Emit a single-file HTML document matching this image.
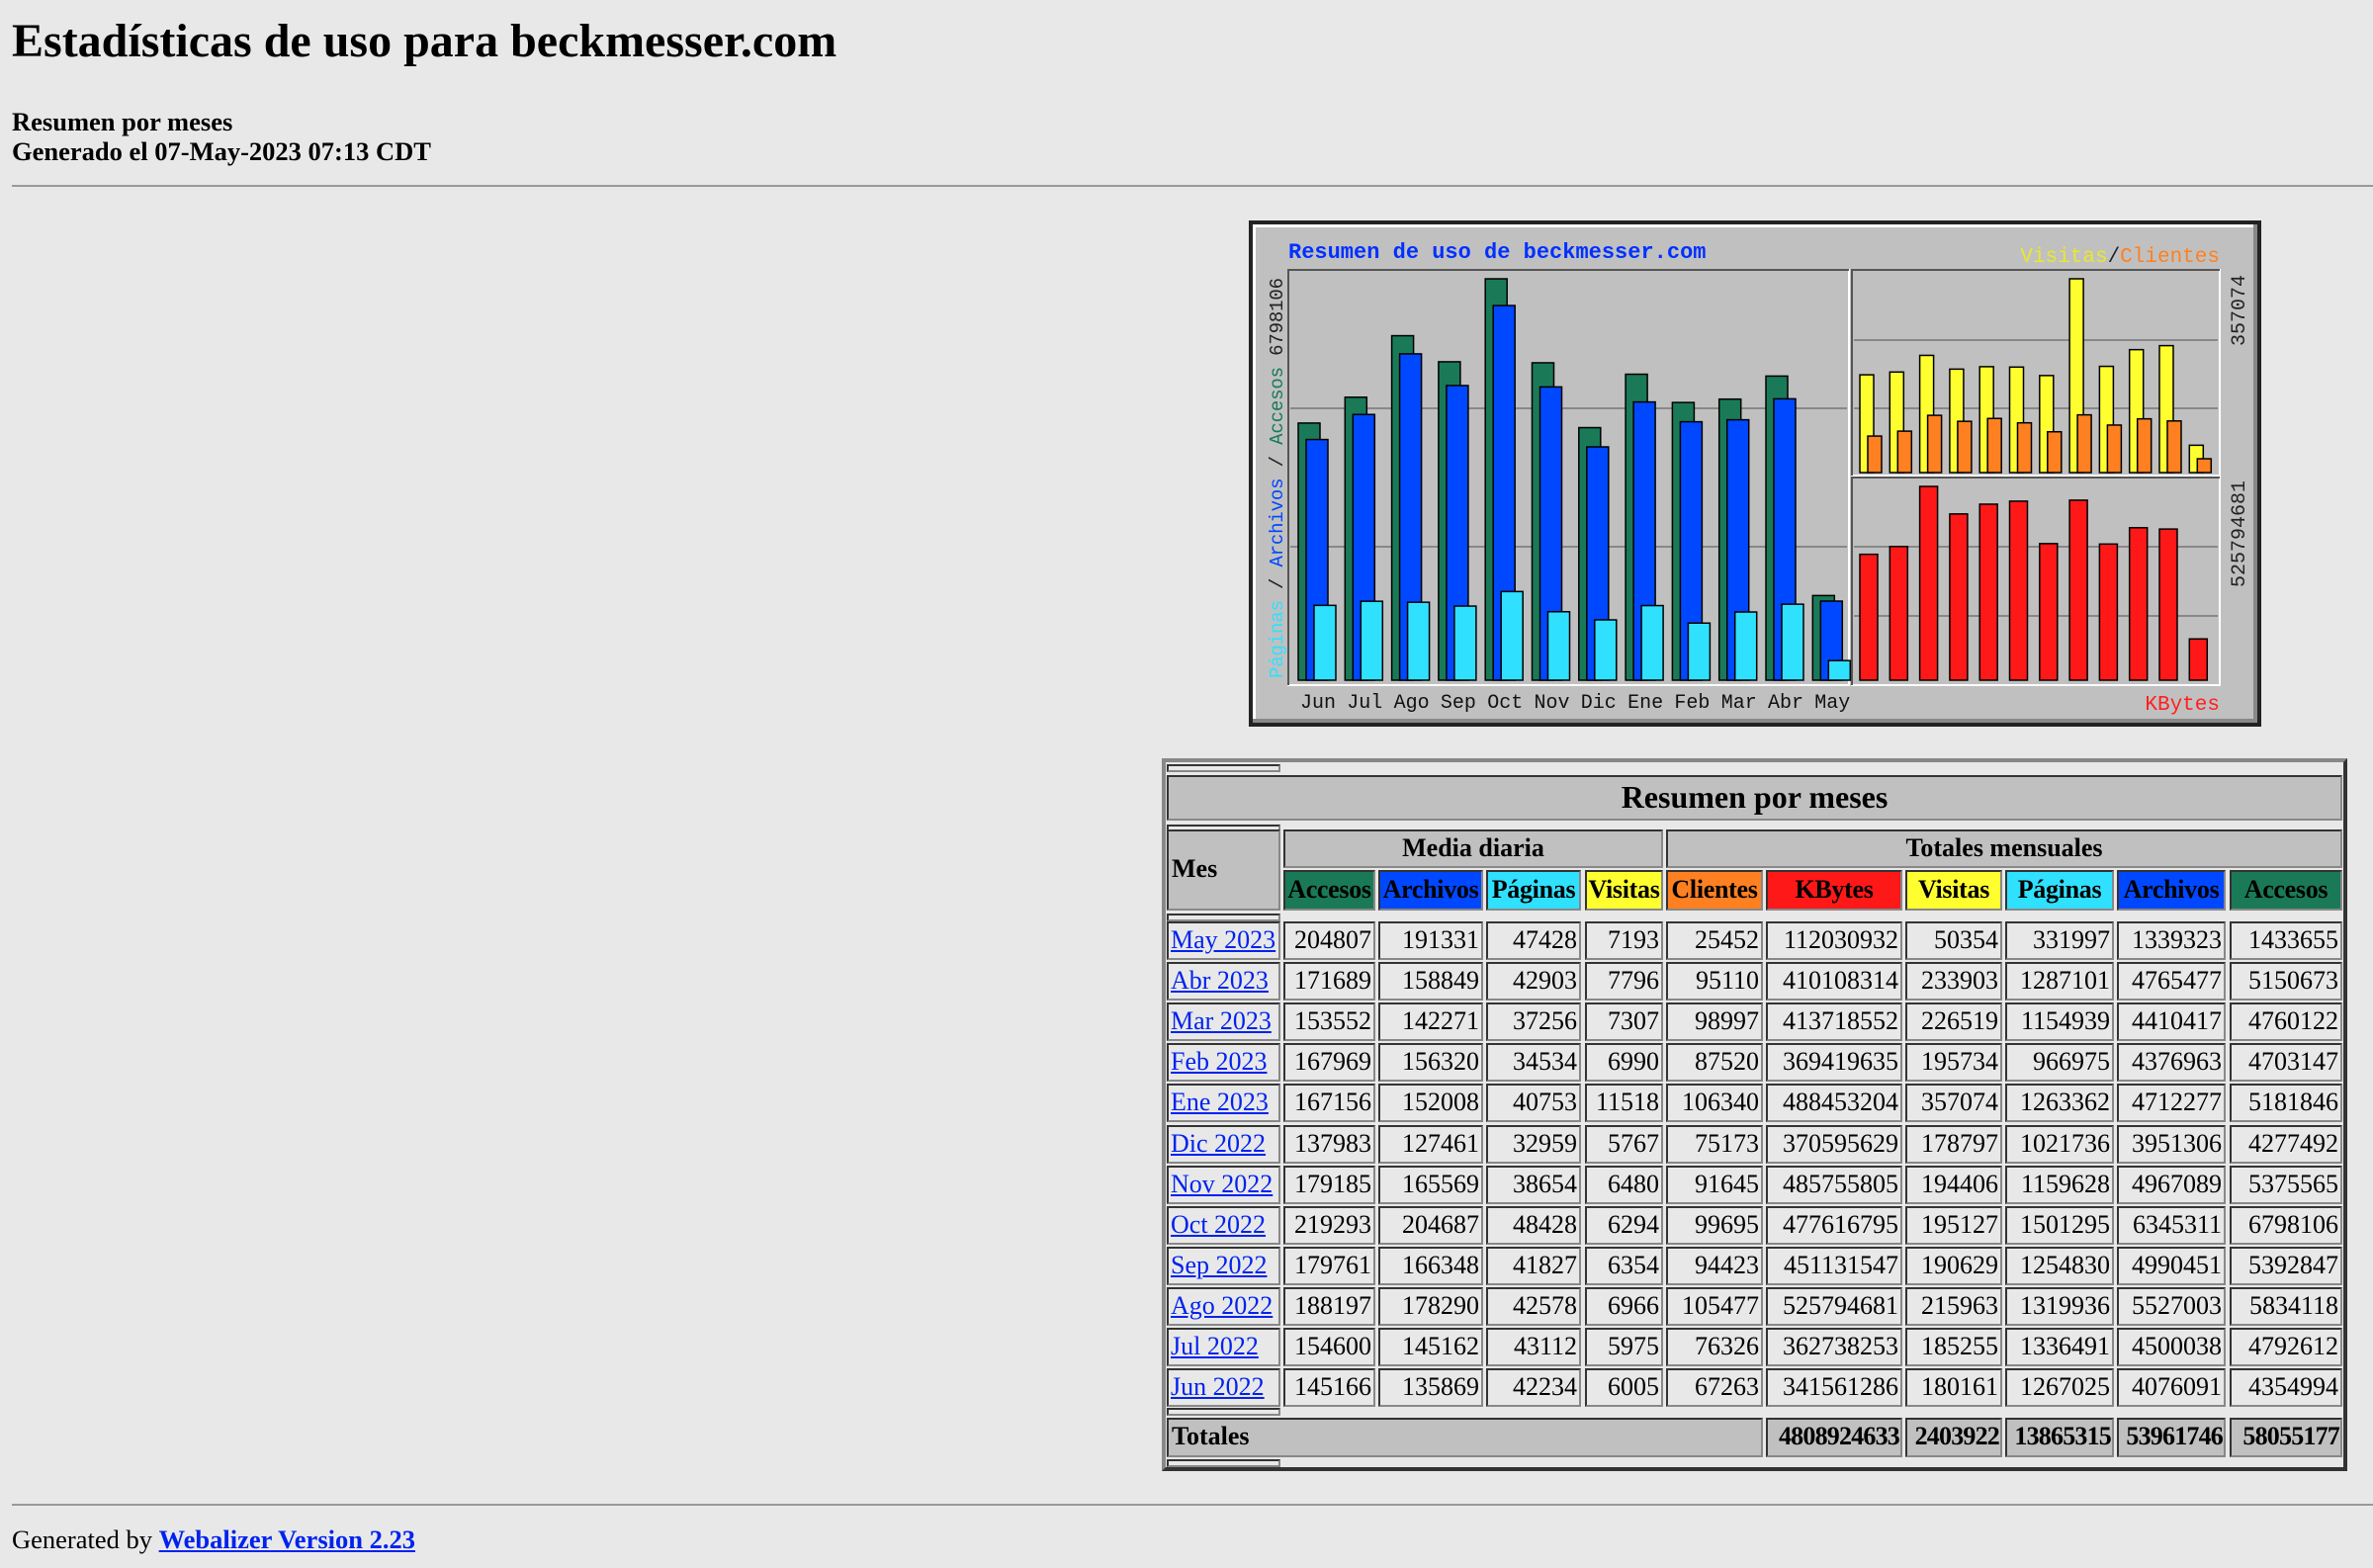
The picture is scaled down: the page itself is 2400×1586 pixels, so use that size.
<!DOCTYPE html>
<html><head><meta charset="utf-8">
<style>
body{margin:0;background:#e8e8e8;width:2400px;height:1586px;overflow:hidden;position:relative;font-family:"Liberation Serif",serif;color:#000}
.a{position:absolute;white-space:nowrap}
.hr{position:absolute;left:12px;width:2388px;height:0;border-top:2px solid #999;}
.c{position:absolute;box-sizing:border-box;border:2px solid;border-color:#333 #888 #888 #333;font-size:26px;line-height:34px;padding:0 3px;white-space:nowrap;overflow:hidden}
.sp{position:absolute;box-sizing:border-box;left:1180px;width:115px;height:8px;border:2px solid;border-color:#333 #888 #888 #333}
a{color:#0022ee}
</style></head><body>
<div class="a" style="left:12px;top:12px;font-size:48px;font-weight:bold;line-height:60px">Estadísticas de uso para beckmesser.com</div>
<div class="a" style="left:12px;top:108px;font-size:26.5px;font-weight:bold;line-height:30px">Resumen por meses</div>
<div class="a" style="left:12px;top:138px;font-size:26.5px;font-weight:bold;line-height:30px">Generado el 07-May-2023 07:13 CDT</div>
<div class="hr" style="top:187px"></div>

<div style="position:absolute;left:1175px;top:767px;width:1199px;height:721px;box-sizing:border-box;border:4px solid;border-color:#888 #333 #333 #888"></div>
<div id="tbl"></div>

<div class="hr" style="top:1521px"></div>
<div class="a" style="left:12px;top:1542px;font-size:26.5px;line-height:30px">Generated by <a href="#" style="font-weight:bold">Webalizer Version 2.23</a></div>

<svg id="ch" style="position:absolute;left:0;top:0" width="2400" height="1586" xmlns="http://www.w3.org/2000/svg"></svg>

<script>
var cols=[[1180,1295],[1298,1391],[1394,1500],[1503,1599],[1603,1682],[1685,1783],[1786,1924],[1927,2025],[2028,2138],[2141,2251],[2255,2369]];
var h='';
function cell(x1,x2,y,hh,txt,st){h+='<div class="c" style="left:'+x1+'px;top:'+y+'px;width:'+(x2-x1)+'px;height:'+hh+'px;'+(st||'')+'">'+txt+'</div>';}
h+='<div class="sp" style="top:773px"></div>';
cell(1180,2369,784,46,'Resumen por meses','background:#c0c0c0;text-align:center;font-weight:bold;font-size:32px;line-height:40px');
h+='<div class="sp" style="top:834px"></div>';
cell(1180,1295,839,82,'Mes','background:#c0c0c0;font-weight:bold;line-height:76px');
cell(1298,1682,839,39,'Media diaria','background:#c0c0c0;font-weight:bold;text-align:center');
cell(1685,2369,839,39,'Totales mensuales','background:#c0c0c0;font-weight:bold;text-align:center');
var hc=[['Accesos','#1a7a58'],['Archivos','#0048ff'],['Páginas','#30e0ff'],['Visitas','#ffff30'],['Clientes','#ff8020'],['KBytes','#ff1818'],['Visitas','#ffff30'],['Páginas','#30e0ff'],['Archivos','#0048ff'],['Accesos','#1a7a58']];
for(var i=0;i<10;i++)cell(cols[i+1][0],cols[i+1][1],880,41,hc[i][0],'background:'+hc[i][1]+';font-weight:bold;text-align:center;line-height:36px;padding:0;letter-spacing:-0.3px');
h+='<div class="sp" style="top:924px"></div>';
var rows=[
['May 2023',204807,191331,47428,7193,25452,112030932,50354,331997,1339323,1433655],
['Abr 2023',171689,158849,42903,7796,95110,410108314,233903,1287101,4765477,5150673],
['Mar 2023',153552,142271,37256,7307,98997,413718552,226519,1154939,4410417,4760122],
['Feb 2023',167969,156320,34534,6990,87520,369419635,195734,966975,4376963,4703147],
['Ene 2023',167156,152008,40753,11518,106340,488453204,357074,1263362,4712277,5181846],
['Dic 2022',137983,127461,32959,5767,75173,370595629,178797,1021736,3951306,4277492],
['Nov 2022',179185,165569,38654,6480,91645,485755805,194406,1159628,4967089,5375565],
['Oct 2022',219293,204687,48428,6294,99695,477616795,195127,1501295,6345311,6798106],
['Sep 2022',179761,166348,41827,6354,94423,451131547,190629,1254830,4990451,5392847],
['Ago 2022',188197,178290,42578,6966,105477,525794681,215963,1319936,5527003,5834118],
['Jul 2022',154600,145162,43112,5975,76326,362738253,185255,1336491,4500038,4792612],
['Jun 2022',145166,135869,42234,6005,67263,341561286,180161,1267025,4076091,4354994]];
for(var r=0;r<12;r++){var y=Math.round(932+r*41.1);
 for(var c=0;c<11;c++){ if(c==0)cell(cols[0][0],cols[0][1],y,39,'<a href="#">'+rows[r][0]+'</a>','padding:0 2px');
  else cell(cols[c][0],cols[c][1],y,39,rows[r][c],'text-align:right;padding:0 2px');}}
h+='<div class="sp" style="top:1424px"></div>';
cell(1180,1783,1434,40,'Totales','background:#c0c0c0;font-weight:bold');
var tot=[4808924633,2403922,13865315,53961746,58055177];
for(var i=0;i<5;i++)cell(cols[i+6][0],cols[i+6][1],1434,40,tot[i],'background:#c0c0c0;font-weight:bold;text-align:right;padding:0 1px;letter-spacing:-0.8px');
h+='<div class="sp" style="top:1476px"></div>';
document.getElementById('tbl').innerHTML=h;

var s='';
s+='<rect x="1263" y="223" width="1024" height="512" fill="#222"/>';
s+='<rect x="1267" y="227" width="1016" height="504" fill="#888"/>';
s+='<rect x="1267" y="227" width="1012" height="500" fill="#fff"/>';
s+='<rect x="1270" y="230" width="1009" height="497" fill="#c0c0c0"/>';
function panel(x1,y1,x2,y2){s+='<rect x="'+x1+'" y="'+y1+'" width="'+(x2-x1)+'" height="'+(y2-y1)+'" fill="#c0c0c0" stroke="#fff" stroke-width="2"/>';s+='<path d="M'+x1+' '+y2+'V'+y1+'H'+x2+'" fill="none" stroke="#555" stroke-width="2"/>';}
panel(1303,273,1870,693);panel(1873,273,2245,481);panel(1873,483,2245,693);
function gl(x1,x2,y){s+='<line x1="'+x1+'" x2="'+x2+'" y1="'+y+'" y2="'+y+'" stroke="#888" stroke-width="2"/>';}
gl(1305,1868,413);gl(1305,1868,553);gl(1875,2243,344);gl(1875,2243,413);gl(1875,2243,553);gl(1875,2243,623);
function bar(x,w,v,max,base,top,col){var hh=(base-top)*v/max;s+='<rect x="'+x+'" y="'+(base-hh)+'" width="'+w+'" height="'+hh+'" fill="'+col+'" stroke="#000" stroke-width="1.5"/>';}
var acc=[4354994,4792612,5834118,5392847,6798106,5375565,4277492,5181846,4703147,4760122,5150673,1433655];
var arc=[4076091,4500038,5527003,4990451,6345311,4967089,3951306,4712277,4376963,4410417,4765477,1339323];
var pag=[1267025,1336491,1319936,1254830,1501295,1159628,1021736,1263362,966975,1154939,1287101,331997];
var vis=[180161,185255,215963,190629,195127,194406,178797,357074,195734,226519,233903,50354];
var cli=[67263,76326,105477,94423,99695,91645,75173,106340,87520,98997,95110,25452];
var kb=[341561286,362738253,525794681,451131547,477616795,485755805,370595629,488453204,369419635,413718552,410108314,112030932];
var mn=['Jun','Jul','Ago','Sep','Oct','Nov','Dic','Ene','Feb','Mar','Abr','May'];
for(var i=0;i<12;i++){var x=1313+i*47.3;
 bar(x,22,acc[i],6798106,688,282,'#1a7a58');bar(x+8,22,arc[i],6798106,688,282,'#0048ff');bar(x+16,22,pag[i],6798106,688,282,'#30e0ff');
 s+='<text x="'+(x+20)+'" y="716" font-family="Liberation Mono,monospace" font-size="20" text-anchor="middle" fill="#111">'+mn[i]+'</text>';
 var xr=1881+i*30.3;
 bar(xr,14,vis[i],357074,478,282,'#ffff30');bar(xr+8,14,cli[i],357074,478,282,'#ff8020');
 bar(xr,18,kb[i],525794681,688,492,'#ff1818');}
s+='<text x="1303" y="261" font-family="Liberation Mono,monospace" font-weight="bold" font-size="22" fill="#0030ff">Resumen de uso de beckmesser.com</text>';
s+='<text x="2245" y="265" font-family="Liberation Mono,monospace" font-size="21" text-anchor="end"><tspan fill="#e8e830">Visitas</tspan><tspan fill="#222">/</tspan><tspan fill="#ff8020">Clientes</tspan></text>';
s+='<text x="2245" y="718" font-family="Liberation Mono,monospace" font-size="21" text-anchor="end" fill="#ff2020">KBytes</text>';
s+='<text transform="translate(1297,686) rotate(-90)" font-family="Liberation Mono,monospace" font-size="19" textLength="405" lengthAdjust="spacing"><tspan fill="#30e0ff">Páginas</tspan><tspan fill="#222"> / </tspan><tspan fill="#0048ff">Archivos</tspan><tspan fill="#222"> / </tspan><tspan fill="#1a7a58">Accesos</tspan><tspan fill="#222">  6798106</tspan></text>';
s+='<text transform="translate(2270,350) rotate(-90)" font-family="Liberation Mono,monospace" font-size="20" fill="#222">357074</text>';
s+='<text transform="translate(2270,594) rotate(-90)" font-family="Liberation Mono,monospace" font-size="20" fill="#222">525794681</text>';
document.getElementById('ch').innerHTML=s;
</script>
</body></html>
